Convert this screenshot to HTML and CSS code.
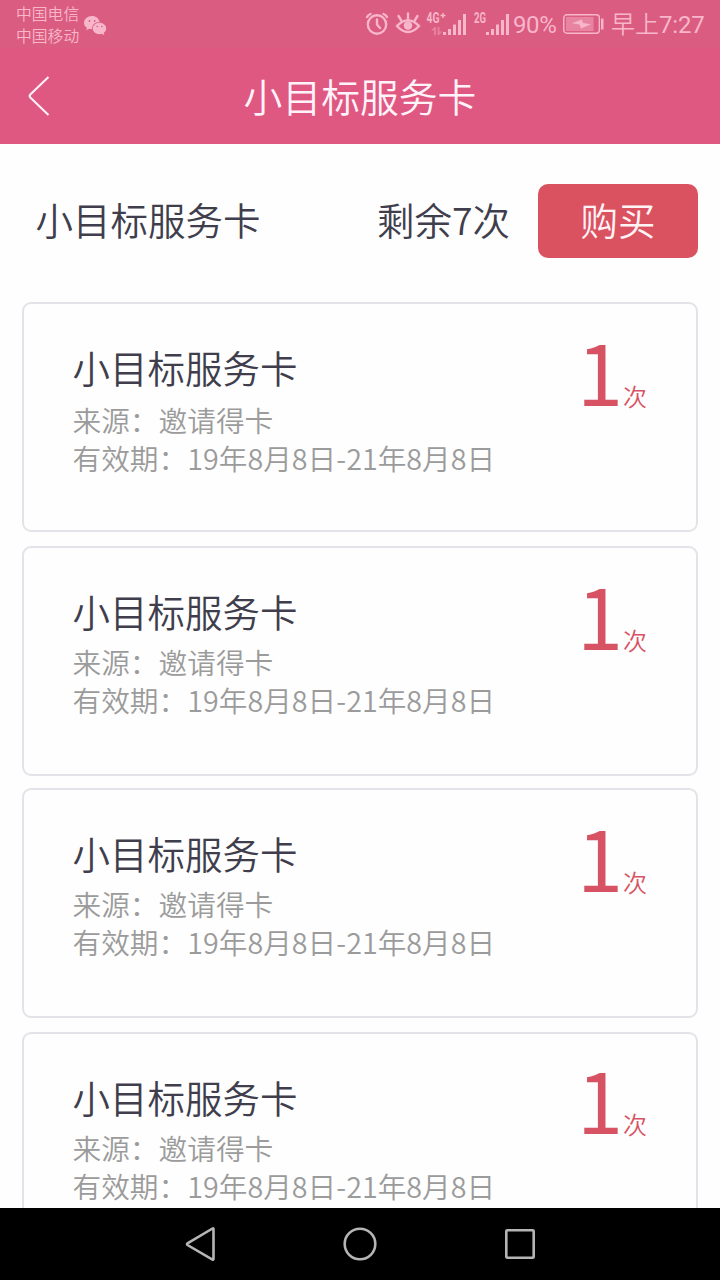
FILE: index.html
```html
<!DOCTYPE html>
<html lang="zh-CN">
	<head>
		<meta charset="UTF-8" />
		<meta name="viewport" content="width=device-width, initial-scale=1.0" />
		<title>小目标服务卡</title>
		<link rel="stylesheet" href="styles.css">
	</head>
	<body>
		<div class="statusbar">
			<div class="carriers">
				<span>中国电信</span>
				<span>中国移动</span>
			</div>
			<svg class="wechat" width="24" height="20" viewBox="0 0 24 20">
				<path d="M8 0C3.500 0 0 3 0 6.700c0 2.100 1.100 3.900 2.900 5.100L2.200 14.300l3-1.500c.9.200 1.800.4 2.800.4C8 8.500 11.500 6 15.600 6 15 2.600 12 0 8 0z" />
				<path d="M15.500 6.800c-3.700 0-6.700 2.500-6.700 5.700s3 5.700 6.700 5.700c.8 0 1.600-.1 2.400-.4l2.400 1.400-.6-2.200c1.500-1.100 2.500-2.700 2.500-4.500 0-3.200-3-5.700-6.700-5.700z" />
				<g class="dots">
					<circle cx="5.500" cy="5" r=".9" />
					<circle cx="10.700" cy="5" r=".9" />
					<circle cx="13.300" cy="10.500" r=".8" />
					<circle cx="17.900" cy="10.500" r=".8" />
				</g>
			</svg>
			<div class="indicators">
				<svg width="148" height="28" viewBox="0 0 148 28">
					<!-- alarm -->
					<g class="line">
						<circle cx="12" cy="14.500" r="9.200" />
						<path d="M12 9.500v5l3 3.500M2 7Q3 5 5.500 4M18.500 4Q21 5 22 7" />
					</g>
					<!-- eye -->
					<g class="line">
						<path d="M32 16Q43 4.500 54 16Q43 28 32 16zM43 8.500V3.500M36 10l-2.500-4M50 10l2.500-4" />
					</g>
					<circle cx="43" cy="15.500" r="4.300" />
					<!-- signal 4G+ -->
					<text x="61.500" y="13" textLength="13" lengthAdjust="spacingAndGlyphs">4G</text>
					<path d="M75.500 4.800h5v1.500h-5zM77.200 3h1.500v5h-1.500z" />
					<path class="dim" d="M66 20.500l3.500-3.500H71v8h-2v-4.500zM72.500 17h2v4.500h3L74 25h-1.500z" />
					<path d="M78 22h3v3h-3zM83 19h3v6h-3zM88 14.500h3V25h-3zM93 10h3v15h-3zM98 4h3v21h-3z" />
					<!-- signal 2G -->
					<text x="109" y="13" textLength="12" lengthAdjust="spacingAndGlyphs">2G</text>
					<path d="M121 22h3v3h-3zM126 19h3v6h-3zM131 14.500h3V25h-3zM136 10h3v15h-3zM141 4h3v21h-3z" />
				</svg>
				<span class="percent">90%</span>
				<svg class="battery" width="41" height="20" viewBox="0 0 41 20">
					<rect class="shell" x=".8" y=".8" width="35.500" height="18.400" rx="3" />
					<rect class="level" x="3" y="3" width="27.500" height="14" />
					<path d="M9 9.300l10-3.800.8 3.500 8 1.300-9.800 4.200-1.500-4z" />
					<rect x="38" y="4.500" width="2.500" height="11" rx=".5" />
				</svg>
				<span class="clock">早上<span>7:27</span></span>
			</div>
		</div>

		<div class="header">
			<svg class="back" width="22" height="40" viewBox="0 0 22 40">
				<path d="M20.500 1L2.300 18.500q-1.300 1.500 0 3L20.500 39" />
			</svg>
			<h1>小目标服务卡</h1>
		</div>

		<div class="summary">
			<span class="name">小目标服务卡</span>
			<span class="remain">剩余7次</span>
			<button>购买</button>
		</div>

		<div class="cards">
			<div class="card">
				<div class="info">
					<h2>小目标服务卡</h2>
					<p>来源：邀请得卡</p>
					<p>有效期：19年8月8日-21年8月8日</p>
				</div>
				<div class="count"><b>1</b><span>次</span></div>
			</div>
			<div class="card">
				<div class="info">
					<h2>小目标服务卡</h2>
					<p>来源：邀请得卡</p>
					<p>有效期：19年8月8日-21年8月8日</p>
				</div>
				<div class="count"><b>1</b><span>次</span></div>
			</div>
			<div class="card">
				<div class="info">
					<h2>小目标服务卡</h2>
					<p>来源：邀请得卡</p>
					<p>有效期：19年8月8日-21年8月8日</p>
				</div>
				<div class="count"><b>1</b><span>次</span></div>
			</div>
			<div class="card">
				<div class="info">
					<h2>小目标服务卡</h2>
					<p>来源：邀请得卡</p>
					<p>有效期：19年8月8日-21年8月8日</p>
				</div>
				<div class="count"><b>1</b><span>次</span></div>
			</div>
		</div>

		<div class="navbar">
			<svg width="34" height="36" viewBox="0 0 34 36">
				<path d="M29.500 2.500q1-.6 1 .6V33q0 1-1 .5L4.500 19q-1-.8 0-1.600z" />
			</svg>
			<svg width="34" height="36" viewBox="0 0 34 36">
				<circle cx="17" cy="18" r="15.300" />
			</svg>
			<svg width="34" height="36" viewBox="0 0 34 36">
				<rect x="3.300" y="4.300" width="27.400" height="27.400" rx="1" />
			</svg>
		</div>
	</body>
</html>
```

FILE: styles.css
```css
* {
	box-sizing: border-box;
}

body {
	display: flex;
	flex-direction: column;
	height: 1280px;
	margin: 0;
	overflow: hidden;
	background: #fefefe;
	color: #403e4d;
	font-family: "Noto Sans CJK SC", sans-serif;
	font-weight: 350;
}

h1, h2, p {
	margin: 0;
	font-weight: 350;
}

/* status bar */
.statusbar {
	display: flex;
	flex: none;
	align-items: center;
	height: 48px;
	padding: 0 16px;
	background: #da5c80;
	color: #f8b6cb;
}

.statusbar svg {
	flex: none;
	fill: #f8b6cb;
}

.carriers {
	display: flex;
	flex-direction: column;
	width: 68px;
	padding-top: 2px;
	font-size: 15.8px;
	line-height: 22px;
}

.wechat {
	margin-top: 3px;
}

.wechat .dots {
	fill: #da5c80;
}

.indicators {
	display: flex;
	align-items: center;
	height: 48px;
	margin-left: auto;
	font-family: Roboto, "Noto Sans CJK SC", sans-serif;
	font-size: 24px;
	font-weight: 400;
}

.indicators .line {
	fill: none;
	stroke: #f8b6cb;
	stroke-width: 2.4;
	stroke-linecap: round;
}

.indicators text {
	font-size: 14px;
	font-weight: 700;
}

.dim {
	opacity: 0.4;
}

.percent {
	width: 50px;
	padding-top: 1px;
	letter-spacing: -0.4px;
}

.battery .shell {
	fill: none;
	stroke: #f8b6cb;
	stroke-width: 1.4;
}

.battery .level {
	opacity: 0.45;
}

.clock {
	width: 93px;
	margin-left: 7px;
	padding-bottom: 4px;
	font-weight: 350;
	white-space: nowrap;
}

.clock span {
	font-weight: 400;
	letter-spacing: -0.2px;
}

/* title */
.header {
	display: grid;
	grid-template-columns: 60px 1fr 60px;
	flex: none;
	align-items: center;
	height: 96px;
	background: #df5881;
	color: #fff3f9;
}

.header h1 {
	padding-bottom: 3px;
	font-size: 38.8px;
	line-height: 56px;
	text-align: center;
}

.back {
	margin-left: 28px;
	fill: none;
	stroke: #fff3f9;
	stroke-width: 2;
}

.summary {
	display: flex;
	flex: none;
	align-items: center;
	height: 158px;
	padding: 0 22px 4px 35.5px;
	font-size: 37.5px;
}

.summary span {
	padding-bottom: 6px;
}

.summary .remain {
	margin-left: auto;
}

.summary button {
	width: 160px;
	height: 74px;
	margin-left: 28px;
	padding: 0 0 6px;
	border: none;
	border-radius: 10px;
	background: #da5160;
	color: #fff3f6;
	font-family: inherit;
	font-size: 37.5px;
	font-weight: 350;
}

/* list of cards */
.cards {
	flex: 1;
	min-height: 0;
	padding: 0 22px;
	overflow: hidden;
}

.card {
	display: flex;
	justify-content: space-between;
	height: 230px;
	margin-bottom: 14px;
	padding: 34px 49px 0 48.5px;
	border: 2px solid #e4e3e9;
	border-radius: 9px;
}

.card:nth-child(2) {
	margin-bottom: 12px;
}

.card h2 {
	height: 61px;
	font-size: 37.5px;
	line-height: 58px;
}

.card:first-child h2 {
	height: 63px;
}

.card p {
	color: #9b9b9b;
	font-size: 28.7px;
	line-height: 38px;
}

.count {
	display: flex;
	align-items: baseline;
	height: 80px;
	color: #d75364;
	line-height: 65px;
}

.card:nth-child(4) .count {
	line-height: 61px;
}

.count b {
	font-size: 83px;
	font-weight: 400;
}

.count span {
	font-size: 24px;
}

/* android buttons */
.navbar {
	display: flex;
	flex: none;
	justify-content: center;
	align-items: center;
	gap: 126px;
	height: 72px;
	background: #000;
}

.navbar svg {
	fill: none;
	stroke: #b5b5b5;
	stroke-width: 2.6;
}
```
